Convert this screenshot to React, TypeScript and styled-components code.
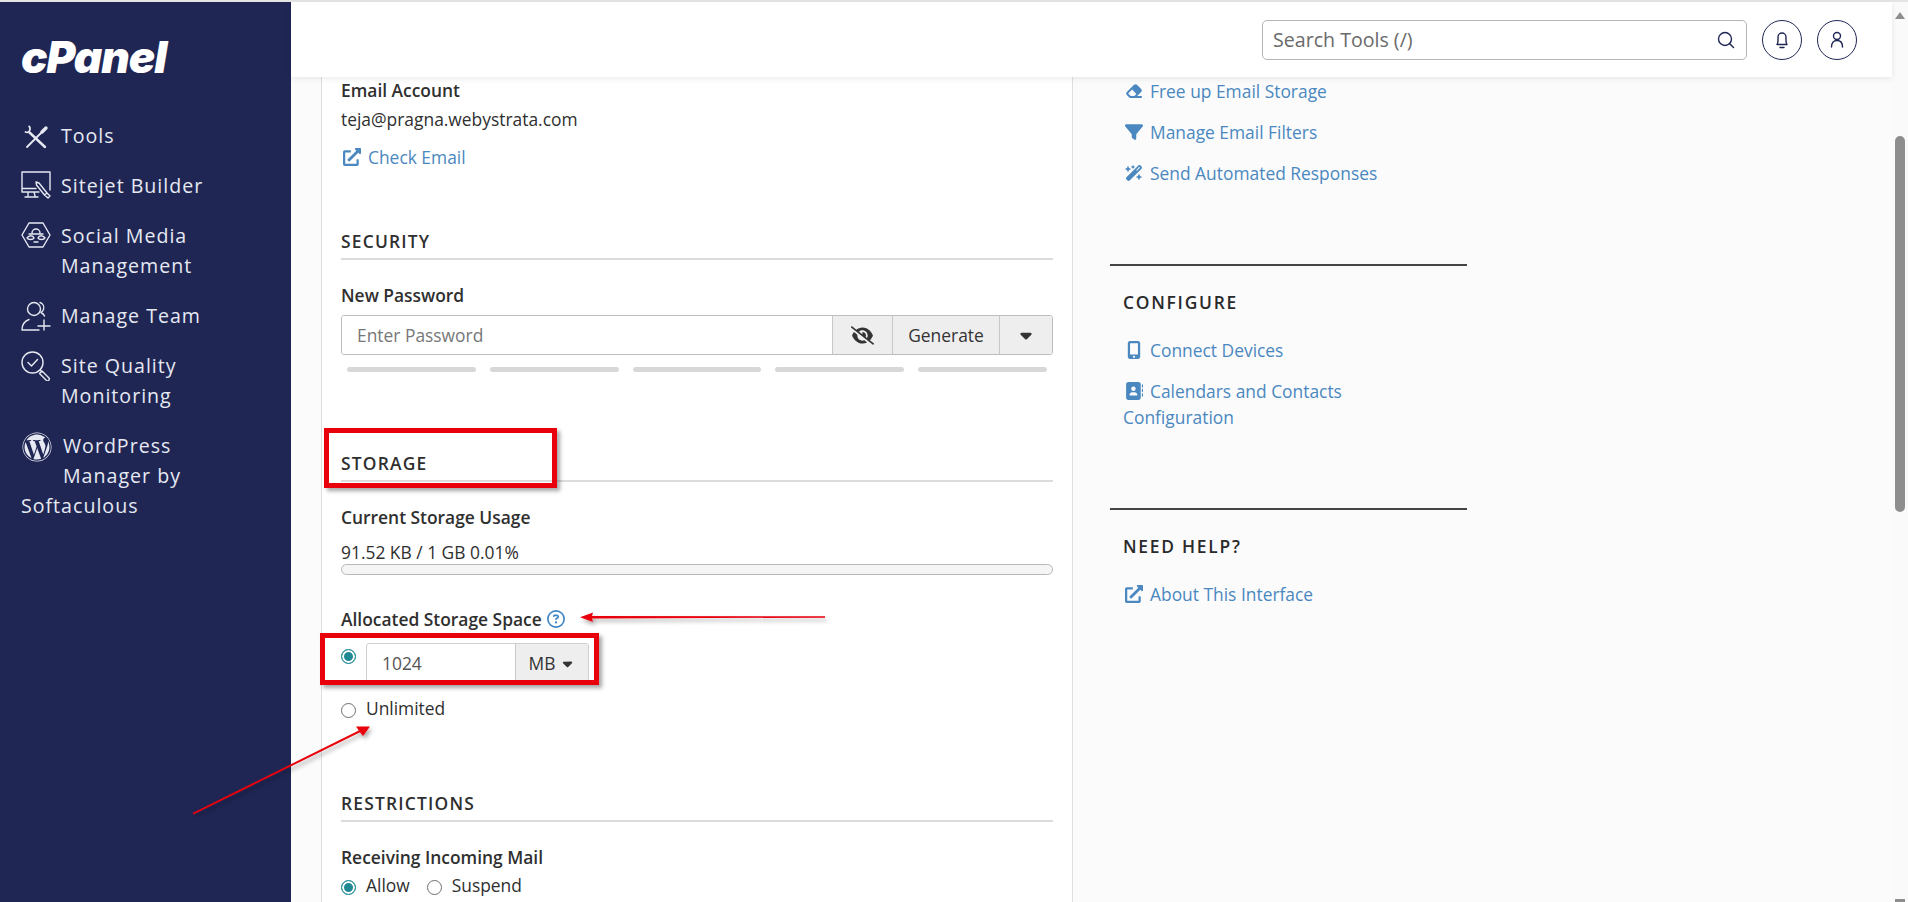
import React from "react";
import styled, { createGlobalStyle } from "styled-components";
import { FaExternalLinkAlt, FaWordpress } from "react-icons/fa";
import {
  FaAddressBook,
  FaCaretDown,
  FaEraser,
  FaEyeSlash,
  FaFilter,
  FaMobileScreenButton,
  FaRegCircleQuestion,
  FaWandMagicSparkles,
} from "react-icons/fa6";

const GlobalStyle = createGlobalStyle`
  html, body {
    margin: 0;
    height: 100%;
    overflow: hidden;
    background: #fbfbfc;
  }
  * {
    box-sizing: border-box;
  }
`;

const Shell = styled.div`
  position: relative;
  display: flex;
  height: 902px;
  padding-top: 2px;
  background: #fbfbfc;
  color: #2f2f2f;
  font-family: "Open Sans", sans-serif;
  font-size: 17.4px;
  line-height: 26px;
  overflow: hidden;
  &::before {
    content: "";
    position: absolute;
    top: 0;
    left: 0;
    right: 0;
    height: 2px;
    background: #e4e4e4;
  }
`;

const Sidebar = styled.nav`
  flex: 0 0 291px;
  padding: 38px 0 0 21px;
  background: #1f2654;
  color: #e6e9f2;
`;

const Logo = styled.div`
  height: 34px;
  color: #ffffff;
  font-family: Inter, sans-serif;
  font-size: 44px;
  font-style: italic;
  font-weight: 900;
  line-height: 34px;
  letter-spacing: -1px;
`;

const NavList = styled.div`
  display: flex;
  flex-direction: column;
  margin-top: 47px;
  gap: 20px;
  font-size: 19.6px;
  line-height: 30px;
  letter-spacing: 1px;
`;

const NavItem = styled.a`
  display: flex;
  gap: 10px;
  width: 240px;
`;

const NavIcon = styled.svg`
  flex: 0 0 30px;
  width: 30px;
  height: 30px;
  fill: none;
  stroke: #e6e9f2;
  stroke-width: 1.4;
  stroke-linecap: round;
  stroke-linejoin: round;
`;

const WrapItem = styled.a`
  display: block;
  width: 200px;
`;

const FloatIcon = styled.span`
  float: left;
  width: 42px;
  height: 60px;
  padding: 1px 0 0 1px;
  font-size: 30px;
  line-height: 30px;
  color: #e6e9f2;
`;

const Main = styled.div`
  flex: 1;
  min-width: 0;
  display: flex;
  flex-direction: column;
`;

const Header = styled.header`
  position: relative;
  z-index: 2;
  flex: 0 0 75px;
  display: flex;
  align-items: flex-start;
  justify-content: flex-end;
  gap: 15px;
  padding: 18px 35px 0 0;
  background: #ffffff;
  box-shadow: 0 2px 6px rgba(0, 0, 0, 0.08);
`;

const SearchBox = styled.div`
  display: flex;
  align-items: center;
  justify-content: space-between;
  width: 485px;
  height: 40px;
  padding: 0 10px;
  border: 1px solid #b5b5b5;
  border-radius: 5px;
  color: #6a6a6a;
  font-size: 19.6px;
  background: #ffffff;
`;

const RoundButton = styled.span`
  display: flex;
  align-items: center;
  justify-content: center;
  width: 40px;
  height: 40px;
  border: 1px solid #1f2654;
  border-radius: 50%;
`;

const HeaderIcon = styled.svg`
  width: 20px;
  height: 20px;
  fill: none;
  stroke: #1f2654;
  stroke-width: 1.4;
  stroke-linecap: round;
  stroke-linejoin: round;
`;

const Columns = styled.div`
  flex: 1;
  display: flex;
  min-height: 0;
  padding-left: 30px;
`;

const FormPanel = styled.section`
  flex: 0 0 752px;
  height: 825px;
  padding: 0 19px 0 19px;
  background: #ffffff;
  border-left: 1px solid #dfdfdf;
  border-right: 1px solid #dfdfdf;
  overflow: hidden;
`;

const Label = styled.div<{ $mt?: number }>`
  margin-top: ${(p) => p.$mt ?? 0}px;
  font-weight: 600;
`;

const Plain = styled.div<{ $mt?: number }>`
  margin-top: ${(p) => p.$mt ?? 0}px;
`;

const SectionHeading = styled.h2<{ $mt: number }>`
  margin: ${(p) => p.$mt}px 0 0;
  padding-bottom: 4px;
  border-bottom: 2px solid #dcdcdc;
  color: #2f2f2f;
  font-size: 17.4px;
  font-weight: 600;
  letter-spacing: 1.2px;
  line-height: 26px;
  text-transform: uppercase;
`;

const TextLink = styled.a<{ $mt?: number }>`
  display: block;
  max-width: 280px;
  margin-top: ${(p) => p.$mt ?? 0}px;
  color: #4a88bf;
`;

const LinkIcon = styled.span`
  display: inline-flex;
  justify-content: center;
  width: 21px;
  margin-right: 6px;
  font-size: 18px;
  vertical-align: -2px;
`;

const InputGroup = styled.div`
  display: flex;
  height: 40px;
  margin-top: 7px;
  border: 1px solid #bdbdbd;
  border-radius: 3px;
  overflow: hidden;
`;

const FieldText = styled.div`
  flex: 1;
  padding: 6px 15px;
  color: #777777;
  background: #ffffff;
`;

const Addon = styled.div<{ $w: number }>`
  flex: 0 0 ${(p) => p.$w}px;
  display: flex;
  align-items: center;
  justify-content: center;
  gap: 5px;
  border-left: 1px solid #c8c8c8;
  background: #eeeeee;
  color: #333333;
`;

const StrengthBars = styled.div`
  display: flex;
  gap: 14px;
  padding: 0 6px;
  margin-top: 12px;
`;

const StrengthBar = styled.span`
  flex: 1;
  height: 5px;
  border-radius: 3px;
  background: #d8d8d8;
`;

const ProgressTrack = styled.div`
  height: 11px;
  margin-top: -1px;
  border: 1px solid #b8b8b8;
  border-radius: 6px;
  background: #f5f5f5;
`;

const HelpIcon = styled.span`
  display: inline-flex;
  margin-left: 5px;
  color: #3f86c4;
  font-size: 18px;
  vertical-align: -2px;
`;

const AllocRow = styled.div`
  display: flex;
  align-items: flex-start;
  margin-top: 11px;
`;

const Radio = styled.span<{ $on?: boolean }>`
  flex: 0 0 15px;
  width: 15px;
  height: 15px;
  border-radius: 50%;
  border: 1px solid ${(p) => (p.$on ? "#1f8a94" : "#6f6f6f")};
  background: ${(p) => (p.$on ? "#1f8a94" : "#ffffff")};
  box-shadow: ${(p) => (p.$on ? "inset 0 0 0 2px #ffffff" : "none")};
`;

const AllocRadio = styled(Radio)`
  margin-top: 6px;
  margin-right: 10px;
`;

const SizeGroup = styled.div`
  display: flex;
  width: 223px;
  height: 40px;
  border: 1px solid #cfcfcf;
  border-radius: 3px;
  overflow: hidden;
`;

const SizeValue = styled.div`
  flex: 1;
  padding: 6px 15px;
  color: #555555;
`;

const RadioLine = styled.div<{ $mt?: number }>`
  display: flex;
  align-items: center;
  gap: 17px;
  margin-top: ${(p) => p.$mt ?? 0}px;
`;

const RadioOption = styled.label`
  display: flex;
  align-items: center;
  gap: 10px;
`;

const RadioMark = styled(Radio)`
  margin-top: 5px;
`;

const Aside = styled.aside`
  flex: 1;
  min-width: 0;
  padding-left: 37px;
`;

const AsideBlock = styled.div<{ $mt?: number }>`
  width: 357px;
  margin-top: ${(p) => p.$mt ?? 0}px;
  padding-left: 13px;
`;

const AsideDivided = styled(AsideBlock)`
  padding-top: 23px;
  border-top: 2px solid #444444;
`;

const AsideHeading = styled.h3`
  margin: 0 0 22px;
  color: #2a2a2a;
  font-size: 17.4px;
  font-weight: 600;
  letter-spacing: 1.75px;
  line-height: 26px;
  text-transform: uppercase;
`;

const Scrollbar = styled.div`
  flex: 0 0 16px;
  display: flex;
  flex-direction: column;
  align-items: center;
  justify-content: space-between;
  padding: 10px 0 0;
  background: #fafafa;
`;

const ScrollTop = styled.div`
  display: flex;
  flex-direction: column;
  align-items: center;
  width: 100%;
`;

const ArrowUp = styled.span`
  width: 0;
  height: 0;
  border-left: 5px solid transparent;
  border-right: 5px solid transparent;
  border-bottom: 7px solid #8e8e8e;
`;

const ScrollThumb = styled.span`
  width: 10px;
  height: 376px;
  margin-top: 117px;
  border-radius: 5px;
  background: #8e8e8e;
`;

const ArrowDown = styled.span`
  width: 10px;
  height: 3px;
  background: #8e8e8e;
`;

const RedBox = styled.div<{ $x: number; $y: number; $w: number; $h: number }>`
  position: absolute;
  left: ${(p) => p.$x}px;
  top: ${(p) => p.$y}px;
  width: ${(p) => p.$w}px;
  height: ${(p) => p.$h}px;
  border: 5px solid #e8000b;
  box-shadow: 3px 3px 4px rgba(0, 0, 0, 0.35);
  z-index: 3;
`;

const ArrowLayer = styled.svg`
  position: absolute;
  inset: 0;
  width: 1908px;
  height: 902px;
  pointer-events: none;
  z-index: 3;
`;

function ToolsIcon() {
  return (
    <NavIcon viewBox="0 0 30 30">
      <path d="M8.500 11.500L24 26" strokeWidth="2.4" />
      <path d="M9 7.500a3.200 3.200 0 0 1-4.500 3.500M9 7.500c0-.8-.3-1.500-.8-2" strokeWidth="1.800" />
      <path d="M21 11L6 26" strokeWidth="1.800" />
      <path d="M25 7l-4 4" strokeWidth="3.400" />
    </NavIcon>
  );
}

function SitejetIcon() {
  return (
    <NavIcon viewBox="0 0 30 30">
      <path d="M29 19V1H1v20h17M1 17.500h14M7 21v4M13 21l1 4M4 26h13" />
      <path d="M18 12l8 10-2.500 2-8-10-.5-3zM26 22l3 3-2 2-3.500-3" />
    </NavIcon>
  );
}

function SocialIcon() {
  return (
    <NavIcon viewBox="0 0 30 30">
      <path d="M8 2h14l7 12-7 12H8L1 14z" />
      <path d="M11 12a4 4 0 0 1 8 0M8 13h14M6 17c2-3 6-3 7 0-1 2-6 2-7 0zM24 17c-2-3-6-3-7 0 1 2 6 2 7 0zM13 21h4" />
    </NavIcon>
  );
}

function TeamIcon() {
  return (
    <NavIcon viewBox="0 0 30 30">
      <circle cx="13" cy="8" r="6.500" />
      <path d="M19 1.500c3 1 4.500 4 3.500 7-.4 1.200-1.300 2.200-2.500 3 2 1 3 2 3.500 3.500M1 29c0-6 3-9 7-10.500M1 29h17M17 25h12M23 19v10" />
    </NavIcon>
  );
}

function QualityIcon() {
  return (
    <NavIcon viewBox="0 0 30 30">
      <circle cx="11.500" cy="11.500" r="10.500" />
      <path d="M7 11.500l3.500 3.500 6-6.500M19 19l2 2M21 20l7 7a1.800 1.800 0 0 1-2.500 2.500l-7-7z" />
    </NavIcon>
  );
}

export default function App() {
  return (
    <>
      <GlobalStyle />
      <Shell>
        <Sidebar>
          <Logo>cPanel</Logo>
          <NavList>
            <NavItem>
              <ToolsIcon />
              <span>Tools</span>
            </NavItem>
            <NavItem>
              <SitejetIcon />
              <span>Sitejet Builder</span>
            </NavItem>
            <NavItem>
              <SocialIcon />
              <span>Social Media Management</span>
            </NavItem>
            <NavItem>
              <TeamIcon />
              <span>Manage Team</span>
            </NavItem>
            <NavItem>
              <QualityIcon />
              <span>Site Quality Monitoring</span>
            </NavItem>
            <WrapItem>
              <FloatIcon>
                <FaWordpress />
              </FloatIcon>
              WordPress Manager by Softaculous
            </WrapItem>
          </NavList>
        </Sidebar>

        <Main>
          <Header>
            <SearchBox>
              <span>Search Tools (/)</span>
              <HeaderIcon viewBox="0 0 20 20">
                <circle cx="9" cy="9" r="6.500" />
                <path d="M13.500 13.500L17.500 17.500" />
              </HeaderIcon>
            </SearchBox>
            <RoundButton>
              <HeaderIcon viewBox="0 0 20 20">
                <path d="M5 14.500h10c-.7-1-1-2-1-4V7a4 4 0 0 0-8 0v3.500c0 2-.3 3-1 4zM8 17.500h4" />
              </HeaderIcon>
            </RoundButton>
            <RoundButton>
              <HeaderIcon viewBox="0 0 20 20">
                <circle cx="10" cy="6" r="3.500" />
                <path d="M4.500 17c0-4 2-6.500 5.500-6.500s5.500 2.500 5.500 6.500" />
              </HeaderIcon>
            </RoundButton>
          </Header>

          <Columns>
            <FormPanel>
              <Label>Email Account</Label>
              <Plain $mt={3}>teja@pragna.webystrata.com</Plain>
              <TextLink $mt={12}>
                <LinkIcon>
                  <FaExternalLinkAlt />
                </LinkIcon>
                Check Email
              </TextLink>

              <SectionHeading $mt={58}>Security</SectionHeading>
              <Label $mt={22}>New Password</Label>
              <InputGroup>
                <FieldText>Enter Password</FieldText>
                <Addon $w={60}>
                  <FaEyeSlash size={23} />
                </Addon>
                <Addon $w={107}>Generate</Addon>
                <Addon $w={53}>
                  <FaCaretDown size={18} />
                </Addon>
              </InputGroup>
              <StrengthBars>
                <StrengthBar />
                <StrengthBar />
                <StrengthBar />
                <StrengthBar />
                <StrengthBar />
              </StrengthBars>

              <SectionHeading $mt={78}>Storage</SectionHeading>
              <Label $mt={22}>Current Storage Usage</Label>
              <Plain $mt={9}>91.52 KB / 1 GB 0.01%</Plain>
              <ProgressTrack />
              <Label $mt={31}>
                Allocated Storage Space
                <HelpIcon>
                  <FaRegCircleQuestion />
                </HelpIcon>
              </Label>
              <AllocRow>
                <AllocRadio $on />
                <SizeGroup>
                  <SizeValue>1024</SizeValue>
                  <Addon $w={73}>
                    MB
                    <FaCaretDown size={15} />
                  </Addon>
                </SizeGroup>
              </AllocRow>
              <RadioLine $mt={12}>
                <RadioOption>
                  <RadioMark />
                  <span>Unlimited</span>
                </RadioOption>
              </RadioLine>

              <SectionHeading $mt={69}>Restrictions</SectionHeading>
              <Label $mt={22}>Receiving Incoming Mail</Label>
              <RadioLine $mt={2}>
                <RadioOption>
                  <RadioMark $on />
                  <span>Allow</span>
                </RadioOption>
                <RadioOption>
                  <RadioMark />
                  <span>Suspend</span>
                </RadioOption>
              </RadioLine>
            </FormPanel>

            <Aside>
              <AsideBlock $mt={1}>
                <TextLink>
                  <LinkIcon>
                    <FaEraser />
                  </LinkIcon>
                  Free up Email Storage
                </TextLink>
                <TextLink $mt={15}>
                  <LinkIcon>
                    <FaFilter />
                  </LinkIcon>
                  Manage Email Filters
                </TextLink>
                <TextLink $mt={15}>
                  <LinkIcon>
                    <FaWandMagicSparkles />
                  </LinkIcon>
                  Send Automated Responses
                </TextLink>
              </AsideBlock>

              <AsideDivided $mt={78}>
                <AsideHeading>Configure</AsideHeading>
                <TextLink>
                  <LinkIcon>
                    <FaMobileScreenButton />
                  </LinkIcon>
                  Connect Devices
                </TextLink>
                <TextLink $mt={15}>
                  <LinkIcon>
                    <FaAddressBook />
                  </LinkIcon>
                  Calendars and Contacts Configuration
                </TextLink>
              </AsideDivided>

              <AsideDivided $mt={78}>
                <AsideHeading>Need Help?</AsideHeading>
                <TextLink>
                  <LinkIcon>
                    <FaExternalLinkAlt />
                  </LinkIcon>
                  About This Interface
                </TextLink>
              </AsideDivided>
            </Aside>
          </Columns>
        </Main>

        <Scrollbar>
          <ScrollTop>
            <ArrowUp />
            <ScrollThumb />
          </ScrollTop>
          <ArrowDown />
        </Scrollbar>

        <RedBox $x={324} $y={428} $w={233} $h={60} />
        <RedBox $x={320} $y={633} $w={279} $h={52} />
        <ArrowLayer viewBox="0 0 1908 902">
          <defs>
            <filter id="arrowShadow" x="-10%" y="-50%" width="120%" height="200%">
              <feDropShadow dx="2" dy="3" stdDeviation="2" floodColor="#000" floodOpacity="0.35" />
            </filter>
          </defs>
          <g fill="#e8000b" filter="url(#arrowShadow)">
            <path d="M825 616.300 L592 616 L593 612.500 L580 617.300 L593 622 L592 618.400 L825 617.700 Z" />
            <path d="M193.500 814.500 L360 732.300 L363 736 L370 726.500 L356 726.500 L358.800 730.500 L192.500 813 Z" />
          </g>
        </ArrowLayer>
      </Shell>
    </>
  );
}
